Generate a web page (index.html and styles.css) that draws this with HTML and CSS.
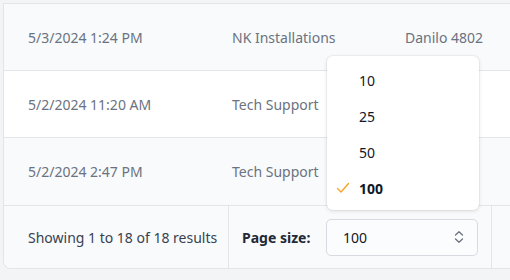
FILE: index.html
```html
<!DOCTYPE html>
<html>
<head>
<meta charset="utf-8">
<link rel="stylesheet" href="styles.css">
</head>
<body>
<div class="page">
  <div class="card">
    <div class="row striped">
      <div class="cell">5/3/2024 1:24 PM</div>
      <div class="cell">NK Installations</div>
      <div class="cell">Danilo 4802</div>
    </div>
    <div class="row">
      <div class="cell">5/2/2024 11:20 AM</div>
      <div class="cell">Tech Support</div>
      <div class="cell"></div>
    </div>
    <div class="row striped last">
      <div class="cell">5/2/2024 2:47 PM</div>
      <div class="cell">Tech Support</div>
      <div class="cell"></div>
    </div>
    <div class="footer">
      <div class="summary">Showing 1 to 18 of 18 results</div>
      <div class="pagesize">
        <span class="label">Page size:</span>
        <div class="select">
          <span>100</span>
          <svg class="chev" width="12" height="14" viewBox="0 0 12 14"><path d="M2.5 5 L6 1.8 L9.5 5 M2.5 9 L6 12.2 L9.5 9" fill="none" stroke="#6b7280" stroke-width="1.3" stroke-linecap="round" stroke-linejoin="round"/></svg>
        </div>
      </div>
      <div class="rest"></div>
    </div>
  </div>
  <div class="menu">
    <div class="opt">10</div>
    <div class="opt">25</div>
    <div class="opt">50</div>
    <div class="opt sel"><svg class="check" width="14" height="12" viewBox="0 0 14 12"><path d="M1.5 6.5 L5 10 L12.5 1.5" fill="none" stroke="#f5a524" stroke-width="1.4" stroke-linecap="round" stroke-linejoin="round"/></svg>100</div>
  </div>
</div>
</body>
</html>
```

FILE: styles.css
```css
* { box-sizing: border-box; }
html, body { margin: 0; padding: 0; }
body {
  background: #f3f4f6;
  font-family: "Noto Sans", "Open Sans", sans-serif;
  font-size: 14px;
  width: 510px;
  height: 280px;
  overflow: hidden;
}
.page {
  position: relative;
  padding: 3px 0 0 3px;
}
.card {
  width: 530px;
  background: #ffffff;
  border-left: 1px solid #e2e5ea;
  border-top: 1px solid #e2e5ea;
  border-bottom: 1px solid #e2e5ea;
  border-bottom-left-radius: 8px;
}
.row {
  display: grid;
  grid-template-columns: 204px 173px 1fr;
  height: 67px;
  align-items: center;
  border-bottom: 1px solid #e2e5ea;
  color: #6b7280;
}
.row.last { height: 68px; }
.row.striped { background: #f8fafc; }
.cell {
  padding-left: 24px;
  white-space: nowrap;
}
.footer {
  display: grid;
  grid-template-columns: 225px 263px 1fr;
  height: 62px;
  background: #f9fafb;
  border-bottom-left-radius: 8px;
}
.summary {
  display: flex;
  align-items: center;
  padding-left: 24px;
  color: #374151;
  border-right: 1px solid #e2e5ea;
  white-space: nowrap;
}
.pagesize {
  display: flex;
  align-items: center;
  padding-left: 13px;
  border-right: 1px solid #e2e5ea;
}
.label {
  font-weight: 700;
  color: #1f2937;
  width: 84px;
  white-space: nowrap;
}
.select {
  width: 152px;
  height: 37px;
  border: 1px solid #d7dbe1;
  border-radius: 5px;
  background: #fbfcfd;
  display: flex;
  align-items: center;
  justify-content: space-between;
  padding: 0 12px 0 16px;
  color: #111827;
}
.chev { display: block; }
.menu {
  position: absolute;
  left: 327px;
  top: 56px;
  width: 152px;
  background: #ffffff;
  border-radius: 6px;
  padding: 6px 0 4px;
  box-shadow: 0 1px 4px rgba(0,0,0,0.12), 0 0 0 1px rgba(0,0,0,0.03);
  color: #111827;
}
.opt {
  height: 36px;
  display: flex;
  align-items: center;
  padding-left: 32px;
  position: relative;
}
.opt.sel { font-weight: 700; }
.check {
  position: absolute;
  left: 9px;
  top: 12px;
}
```
